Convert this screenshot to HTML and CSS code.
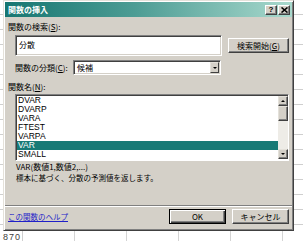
FILE: index.html
```html
<!DOCTYPE html>
<html lang="ja">
<head>
<meta charset="utf-8">
<link rel="stylesheet" href="styles.css">
</head>
<body>
<div class="dialog">
  <div class="titlebar">
    <span class="title">関数の挿入</span>
    <div class="tbtns">
      <span class="tbtn q">?</span>
      <span class="tbtn"><svg width="7" height="6" viewBox="0 0 7 6"><path d="M0.5 0.5 L6.5 5.5 M6.5 0.5 L0.5 5.5" stroke="#000" stroke-width="1.6"/></svg></span>
    </div>
  </div>
  <div class="content">
    <div class="label first">関数の検索(<u>S</u>):</div>
    <div class="search-row">
      <div class="textbox">分散</div>
      <button class="btn search-btn">検索開始(<u>G</u>)</button>
    </div>
    <div class="cat-row">
      <span class="cat-label">関数の分類(<u>C</u>):</span>
      <div class="select"><span class="sel-text">候補</span><span class="drop"><span class="tri"></span></span></div>
    </div>
    <div class="label names">関数名(<u>N</u>):</div>
    <div class="listbox">
      <ul class="items">
        <li>DVAR</li>
        <li>DVARP</li>
        <li>VARA</li>
        <li>FTEST</li>
        <li>VARPA</li>
        <li class="sel">VAR</li>
        <li>SMALL</li>
      </ul>
      <div class="scrollbar">
        <span class="sb-btn"><span class="tri up"></span></span>
        <div class="track"><span class="thumb"></span></div>
        <span class="sb-btn"><span class="tri"></span></span>
      </div>
    </div>
    <div class="desc">
      <div class="syntax">VAR(数値1,数値2,...)</div>
      <div class="explain">標本に基づく、分散の予測値を返します。</div>
    </div>
    <div class="sep"></div>
    <div class="footer">
      <a class="help" href="#">この関数のヘルプ</a>
      <div class="btns">
        <button class="btn default">OK</button>
        <button class="btn">キャンセル</button>
      </div>
    </div>
  </div>
</div>
<div class="sheet-row">
  <span class="rowhead">870</span>
  <span class="cell"></span>
  <span class="cell"></span>
  <span class="cell"></span>
  <span class="cell"></span>
  <span class="cell"></span>
</div>
</body>
</html>
```

FILE: styles.css
```css
* { box-sizing: border-box; margin: 0; padding: 0; }
html, body { width: 303px; height: 241px; overflow: hidden; }
body {
  margin: 0;
  background: #fff repeating-linear-gradient(to bottom, #fff 0 14px, #cfcfcf 14px 15px);
  font-family: "Noto Sans CJK JP", "Noto Sans", sans-serif;
  font-size: 8px;
  color: #000;
}
u { text-decoration: underline; }

.dialog {
  margin-left: 3px;
  width: 291px;
  height: 231px;
  background: #d4d0c8;
  border: 1px solid;
  border-color: #e4e1da #404040 #404040 #e4e1da;
  box-shadow: inset 1px 1px #fff, inset -1px -1px #808080;
  padding: 1px;
  display: flex;
  flex-direction: column;
}

.titlebar {
  height: 15px;
  display: flex;
  align-items: center;
  padding: 0 2px 0 3px;
  background: linear-gradient(90deg, #167671 0%, #4c9c94 45%, #a9d9cd 100%);
  color: #fff;
}
.title { font-weight: bold; font-size: 8px; line-height: 10px; }
.tbtns { margin-left: auto; display: flex; gap: 1px; }
.tbtn {
  width: 12px;
  height: 10px;
  background: #d4d0c8;
  border: 1px solid;
  border-color: #fff #404040 #404040 #fff;
  box-shadow: inset -1px -1px #808080;
  display: flex;
  align-items: center;
  justify-content: center;
  color: #000;
}
.tbtn.q { font-family: "Liberation Sans", sans-serif; font-weight: bold; font-size: 8px; line-height: 8px; }

.content {
  flex: 1;
  display: flex;
  flex-direction: column;
  padding: 0 3px;
}
.label { line-height: 10px; }
.label.first { margin-top: 5px; }

.search-row { display: flex; align-items: flex-start; margin-top: 3px; }
.textbox {
  margin-left: 7px;
  width: 207px;
  height: 21px;
  background: #fff;
  border: 1px solid;
  border-color: #808080 #fff #fff #808080;
  box-shadow: inset 1px 1px #404040, inset -1px -1px #d4d0c8;
  padding: 3px 3px;
  line-height: 11px;
}
.btn {
  height: 15px;
  background: #d4d0c8;
  border: 1px solid;
  border-color: #fff #404040 #404040 #fff;
  box-shadow: inset -1px -1px #808080;
  font-family: "Noto Sans CJK JP", "Noto Sans", sans-serif;
  font-size: 8px;
  line-height: 11px;
  color: #000;
  padding: 0;
}
.search-btn { margin-left: auto; margin-top: 3px; width: 61px; }

.cat-row { display: flex; align-items: center; margin-top: 4px; }
.cat-label { margin-left: 7px; width: 58px; line-height: 10px; }
.select {
  width: 148px;
  height: 15px;
  background: #fff;
  border: 1px solid;
  border-color: #808080 #fff #fff #808080;
  box-shadow: inset 1px 1px #404040, inset -1px -1px #d4d0c8;
  padding: 2px 2px 2px 3px;
  display: flex;
  align-items: center;
}
.sel-text { line-height: 10px; }
.drop {
  margin-left: auto;
  margin-right: -1px;
  width: 9px;
  height: 11px;
  background: #d4d0c8;
  border: 1px solid;
  border-color: #e4e1da #404040 #404040 #e4e1da;
  display: flex;
  align-items: center;
  justify-content: center;
}
.tri {
  width: 0; height: 0;
  border-left: 2px solid transparent;
  border-right: 2px solid transparent;
  border-top: 2px solid #000;
}
.tri.up { border-top: 0; border-bottom: 2px solid #000; }

.label.names { margin-top: 7px; }

.listbox {
  margin-top: 2px;
  margin-left: 7px;
  width: 274px;
  height: 67px;
  background: #fff;
  border: 1px solid;
  border-color: #808080 #fff #fff #808080;
  box-shadow: inset 1px 1px #404040;
  padding: 1px 0 1px 1px;
  display: flex;
  overflow: hidden;
}
.items {
  list-style: none;
  flex: 1;
  font-family: "Liberation Sans", Arial, sans-serif;
  font-size: 8.5px;
}
.items li { height: 9px; line-height: 9px; padding-left: 1px; color: #000; white-space: nowrap; }
.items li.sel { background: #187a76; color: #fff; }

.scrollbar { width: 10px; display: flex; flex-direction: column; }
.sb-btn {
  width: 10px;
  height: 10px;
  background: #d4d0c8;
  border: 1px solid;
  border-color: #e4e1da #404040 #404040 #e4e1da;
  box-shadow: inset -1px -1px #808080;
  display: flex;
  align-items: center;
  justify-content: center;
}
.track { flex: 1; background: #eeece7; }
.thumb {
  display: block;
  height: 15px;
  background: #d4d0c8;
  border: 1px solid;
  border-color: #e4e1da #404040 #404040 #e4e1da;
  box-shadow: inset -1px -1px #808080;
}

.desc { margin-left: 8px; margin-top: 0; }
.syntax { line-height: 11px; font-size: 8px; }
.explain { line-height: 11px; font-size: 7.5px; }

.sep {
  margin: 22px -3px 0;
  height: 2px;
  border-top: 1px solid #808080;
  border-bottom: 1px solid #fff;
}

.footer { display: flex; align-items: center; margin-top: 2px; }
.help { color: #1f1fc8; text-decoration: underline; font-size: 7.5px; line-height: 10px; margin-top: 0; }
.btns { margin-left: auto; display: flex; gap: 6px; }
.btns .btn { width: 57px; }
.btn.default {
  border: 1px solid #000;
  box-shadow: inset 1px 1px #fff, inset -1px -1px #404040, inset -2px -2px #808080;
}

.sheet-row {
  display: flex;
  height: 10px;
  background: #fff;
  color: #404040;
  font-family: "Liberation Sans", Arial, sans-serif;
  font-size: 9px;
  line-height: 13px;
  overflow: hidden;
}
.rowhead { width: 23px; padding-left: 3px; letter-spacing: 1px; border-right: 1px solid #cfcfcf; }
.cell { width: 52px; border-right: 1px solid #d4d4d4; }
```
